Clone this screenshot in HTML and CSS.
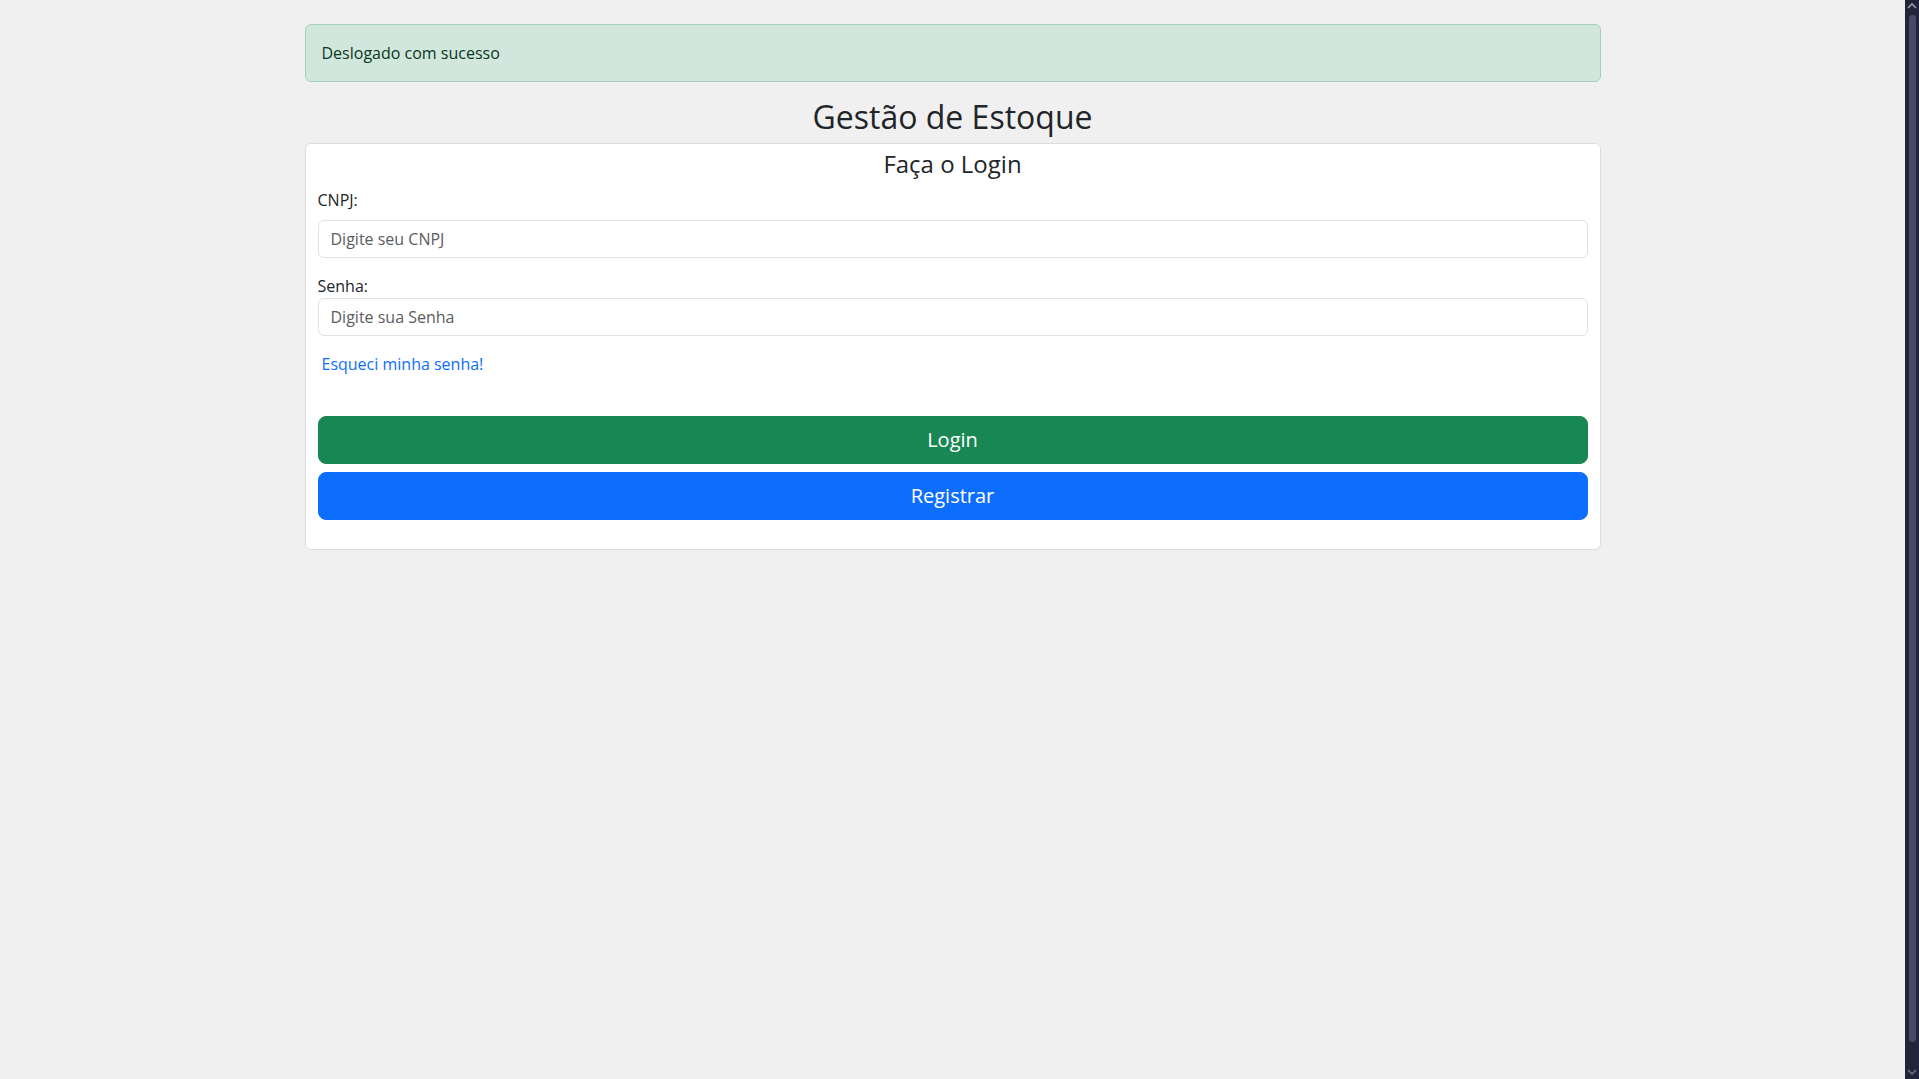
FILE: index.html
```html
<!DOCTYPE html>
<html lang="pt-BR">
<head>
<meta charset="utf-8">
<title>Gestão de Estoque</title>
<link rel="stylesheet" href="styles.css">
</head>
<body>
<div class="page">
  <main class="container">
    <div class="alert">Deslogado com sucesso</div>
    <h2 class="title">Gestão de Estoque</h2>
    <div class="card">
      <h4 class="card-title">Faça o Login</h4>
      <form class="form">
        <label class="label label-first" for="cnpj">CNPJ:</label>
        <input class="input input-first" id="cnpj" type="text" placeholder="Digite seu CNPJ">
        <label class="label" for="senha">Senha:</label>
        <input class="input" id="senha" type="password" placeholder="Digite sua Senha">
        <a class="forgot" href="#">Esqueci minha senha!</a>
        <button type="button" class="btn btn-success">Login</button>
        <button type="button" class="btn btn-primary">Registrar</button>
      </form>
    </div>
  </main>
</div>
<div class="scrollbar">
  <svg class="sb-arrow sb-up" width="10" height="6" viewBox="0 0 10 6"><path d="M1 5 L5 1 L9 5" fill="none" stroke="#9a9db0" stroke-width="1.6"/></svg>
  <div class="sb-thumb"></div>
  <svg class="sb-arrow sb-down" width="10" height="6" viewBox="0 0 10 6"><path d="M1 1 L5 5 L9 1" fill="none" stroke="#6b6e82" stroke-width="1.6"/></svg>
</div>
</body>
</html>
```

FILE: styles.css
```css
* { box-sizing: border-box; }

html, body {
  margin: 0;
  padding: 0;
  height: 100%;
  overflow: hidden;
}

body {
  background: #f0f0f0;
  color: #212529;
  font-family: "Open Sans", "Noto Sans", "Liberation Sans", sans-serif;
  font-size: 16px;
  line-height: 1.5;
}

.page {
  margin-right: 14px;
}

.container {
  width: 1296px;
  margin: 0 auto;
  padding-top: 24px;
}

.alert {
  background: #d1e7dd;
  border: 1px solid #a3cfbb;
  color: #0a3622;
  border-radius: 6px;
  padding: 16px;
  line-height: 24px;
  font-size: 16px;
  margin-bottom: 16px;
}

.title {
  margin: 0 0 7px;
  text-align: center;
  font-size: 32px;
  font-weight: 500;
  line-height: 38.4px;
  color: #212529;
}

.card {
  background: #fff;
  border: 1px solid #dcdde2;
  border-radius: 6px;
  padding: 5px 12px 29px;
}

.card-title {
  margin: 0 0 10px;
  text-align: center;
  font-size: 24px;
  font-weight: 400;
  line-height: 29px;
  color: #212529;
}

.form {
  display: flex;
  flex-direction: column;
}

.label {
  display: block;
  font-size: 16px;
  line-height: 24px;
  color: #212529;
}

.label-first {
  margin-bottom: 8px;
}

.input {
  display: block;
  width: 100%;
  height: 38px;
  padding: 6px 12px;
  font-family: inherit;
  font-size: 16px;
  line-height: 24px;
  color: #212529;
  background: #fff;
  border: 1px solid #dee2e6;
  border-radius: 6px;
  outline: none;
}

.input::placeholder {
  color: #595c5f;
}

.input-first {
  margin-bottom: 16px;
}

.forgot {
  align-self: flex-start;
  margin: 16px 0 0 4px;
  font-size: 16px;
  line-height: 24px;
  color: #0d6efd;
  text-decoration: none;
}

.btn {
  display: block;
  width: 100%;
  height: 48px;
  border-radius: 8px;
  border: 1px solid transparent;
  font-family: inherit;
  font-size: 20px;
  line-height: 30px;
  color: #fff;
  cursor: pointer;
}

.btn-success {
  margin-top: 40px;
  background: #198754;
  border-color: #198754;
}

.btn-primary {
  margin-top: 8px;
  background: #0d6efd;
  border-color: #0d6efd;
}

.scrollbar {
  position: fixed;
  top: 0;
  right: 0;
  width: 14px;
  height: 100%;
  background: #21243a;
}

.sb-arrow {
  position: absolute;
  left: 2px;
}

.sb-up { top: 3px; }
.sb-down { bottom: 4px; }

.sb-thumb {
  position: absolute;
  top: 15px;
  bottom: 37px;
  left: 4px;
  width: 7px;
  border-radius: 4px;
  background: #474a62;
}
```
